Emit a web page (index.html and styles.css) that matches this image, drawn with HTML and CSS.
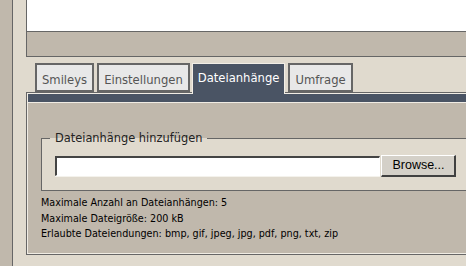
FILE: index.html
```html
<!DOCTYPE html>
<html lang="de">
<head>
  <meta charset="UTF-8" />
  <title>Beitrag schreiben</title>
  <link rel="stylesheet" href="styles.css">
</head>
<body>
  <div class="page">
    <div class="rail"></div>
    <div class="main">
      <div class="editor">
        <div class="editor-text"></div>
        <div class="editor-bar"></div>
      </div>

      <ul class="tabs">
        <li class="tab">Smileys</li>
        <li class="tab">Einstellungen</li>
        <li class="tab active">Dateianhänge</li>
        <li class="tab">Umfrage</li>
      </ul>

      <div class="panel">
        <div class="panel-inner">
          <div class="panel-head"></div>
          <div class="panel-body">
            <fieldset class="upload">
              <legend>Dateianhänge hinzufügen</legend>
              <div class="file-row">
                <span class="file-input"></span>
                <span class="file-btn">Browse...</span>
              </div>
            </fieldset>
            <p class="info">
              Maximale Anzahl an Dateianhängen: 5<br>
              Maximale Dateigröße: 200 kB<br>
              Erlaubte Dateiendungen: bmp, gif, jpeg, jpg, pdf, png, txt, zip
            </p>
          </div>
        </div>
      </div>
    </div>
  </div>
</body>
</html>
```

FILE: styles.css
```css
html, body {
  margin: 0;
  overflow: hidden;
}
body {
  background-color: #e0dace;
  font-family: "DejaVu Sans", sans-serif;
}
.page {
  display: flex;
  min-height: 266px;
}
.rail {
  width: 12px;
  flex: none;
  background-color: #c0b8ac;
  border-right: 1px solid #666;
}
.main {
  flex: none;
  width: 560px;
  padding-left: 13px;
}
.editor {
  border: 1px solid #666;
  border-top: none;
}
.editor-text {
  height: 31px;
  background-color: #fff;
  border-bottom: 1px solid #666;
}
.editor-bar {
  height: 24px;
  background-color: #c0b8ac;
}
.tabs {
  list-style: none;
  display: flex;
  align-items: flex-start;
  gap: 3px;
  height: 29px;
  margin: 6px 0 0;
  padding: 0 0 0 9px;
}
.tab {
  height: 25px;
  padding: 0 5px;
  border: 2px solid #666;
  background-color: #e8e8e8;
  color: #555;
  font-size: 11.6px;
  line-height: 30px;
}
.tab.active {
  position: relative;
  z-index: 1;
  height: 30px;
  margin-left: -1px;
  border: 1px solid #f2eee6;
  border-bottom: none;
  background-color: #4a5464;
  color: #fff;
  line-height: 28px;
}
.panel {
  border: 1px solid #666;
  border-right: none;
}
.panel-inner {
  border: 1px solid #f0ece4;
  border-right: none;
}
.panel-head {
  height: 8px;
  background-color: #4a5464;
  border-bottom: 1px solid #f0ece4;
}
.panel-body {
  background-color: #c0b8ac;
  padding: 28px 0 11px 13px;
}
.upload {
  margin: 0;
  padding: 10px 13px 13px;
  border: 1px solid #666;
  border-right: none;
  background-color: #e0dace;
}
.upload legend {
  margin-left: -5px;
  padding: 0 5px;
  color: #222;
  font-size: 11.4px;
  line-height: 14px;
}
.file-row {
  display: flex;
  align-items: flex-start;
}
.file-input {
  width: 322px;
  height: 17px;
  margin-top: 1px;
  background-color: #fff;
  border-top: 2px solid #444;
  border-left: 2px solid #444;
  border-bottom: 1px solid #fff;
  border-right: 1px solid #fff;
  box-shadow: 0 1px 0 #f4f2ec;
}
.file-btn {
  width: 71px;
  height: 19px;
  margin-left: 1px;
  padding-left: 1px;
  background-color: #d4d0c8;
  border-top: 1px solid #fff;
  border-left: 1px solid #fff;
  border-bottom: 2px solid #404040;
  border-right: 2px solid #404040;
  color: #000;
  font-family: "Liberation Sans", Arial, sans-serif;
  font-size: 12.5px;
  line-height: 19px;
  text-align: center;
}
.info {
  margin: 4px 0 0;
  color: #000;
  font-family: "DejaVu Sans Condensed", "DejaVu Sans", sans-serif;
  font-stretch: condensed;
  font-size: 10.7px;
  line-height: 15.5px;
}
```
